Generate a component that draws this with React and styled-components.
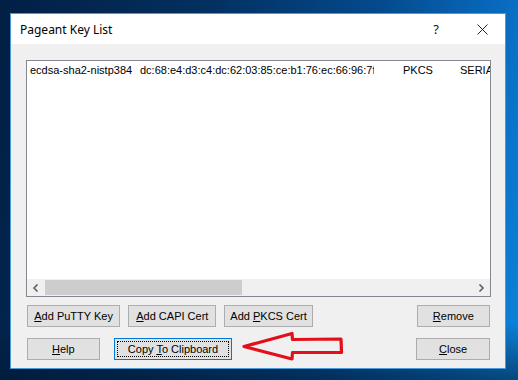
import React from 'react'
import styled, { createGlobalStyle } from 'styled-components'

const Global = createGlobalStyle`
 html, body {
  margin: 0;
  padding: 0;
 }
 body {
  width: 518px;
  height: 380px;
  overflow: hidden;
  font-family: 'Liberation Sans', Arial, sans-serif;
 }
`

const Desktop = styled.div`
 position: relative;
 width: 518px;
 height: 380px;
 padding: 13px 0 0 10px;
 box-sizing: border-box;
 background:
  linear-gradient(180deg, rgba(0, 20, 45, 0) 85%, rgba(0, 22, 48, 0.55) 100%),
  linear-gradient(100deg, #021f45 0%, #02305f 35%, #044a8c 65%, #0869bd 85%, #0d84dc 100%);
`

const Window = styled.div`
 width: 496px;
 height: 356px;
 box-sizing: border-box;
 border: 1px solid #4a9ad8;
 background: #f0f0f0;
 display: flex;
 flex-direction: column;
`

const TitleBar = styled.div`
 height: 30px;
 background: #ffffff;
 display: flex;
 align-items: center;
 padding-left: 9px;
 font-family: 'Noto Sans', 'Liberation Sans', sans-serif;
 font-size: 12px;
 color: #000;
`

const Title = styled.span`
 flex: 1;
`

const TitleButton = styled.div`
 width: 46px;
 height: 30px;
 display: flex;
 align-items: center;
 justify-content: center;
 font-size: 13px;
 color: #111;
`

const Client = styled.div`
 flex: 1;
 padding: 16px 15px 0 15px;
 display: flex;
 flex-direction: column;
`

const ListBox = styled.div`
 width: 465px;
 height: 237px;
 box-sizing: border-box;
 border: 1px solid #828790;
 background: #fff;
 display: flex;
 flex-direction: column;
 overflow: hidden;
`

const Rows = styled.div`
 flex: 1;
 overflow: hidden;
`

const Row = styled.div`
 display: flex;
 white-space: nowrap;
 height: 14px;
 padding-top: 3px;
 font-size: 11px;
 color: #000;
`

const Cell = styled.div`
 flex: none;
 width: ${p => p.$w}px;
 padding-left: 3px;
 box-sizing: border-box;
 overflow: hidden;
`

const HScroll = styled.div`
 height: 17px;
 background: #f0f0f0;
 display: flex;
 align-items: stretch;
`

const ScrollArrow = styled.div`
 width: 18px;
 display: flex;
 align-items: center;
 justify-content: center;
`

const Track = styled.div`
 flex: 1;
 display: flex;
 padding: 1px 0;
`

const Thumb = styled.div`
 width: 197px;
 background: #cdcdcd;
`

const ButtonRow = styled.div`
 display: flex;
 gap: 8px;
 margin-top: ${p => p.$top}px;
 padding-left: 1px;
`

const Button = styled.div`
 width: ${p => p.$w}px;
 height: 22px;
 box-sizing: border-box;
 border: 1px solid ${p => (p.$focus ? '#0078d7' : '#adadad')};
 background: #e1e1e1;
 display: flex;
 align-items: center;
 justify-content: center;
 font-size: 11px;
 color: #000;
 white-space: pre;
 margin-left: ${p => p.$ml || 0}px;
 position: relative;
 u {
  text-decoration: underline;
  text-underline-offset: 1px;
 }
 ${p =>
  p.$focus &&
  `
  &::after {
   content: '';
   position: absolute;
   inset: 2px;
   border: 1px dotted #000;
  }
 `}
`

const Arrow = styled.svg`
 position: absolute;
 left: 240px;
 top: 330px;
`

export default function App() {
 return (
  <Desktop>
   <Global />
   <Window>
    <TitleBar>
     <Title>Pageant Key List</Title>
     <TitleButton>?</TitleButton>
     <TitleButton>
      <svg width="11" height="11" viewBox="0 0 11 11">
       <path d="M0.5 0.5L10.5 10.5M10.5 0.5L0.5 10.5" stroke="#222" strokeWidth="1" />
      </svg>
     </TitleButton>
    </TitleBar>
    <Client>
     <ListBox>
      <Rows>
       <Row>
        <Cell $w={110}>ecdsa-sha2-nistp384</Cell>
        <Cell $w={237}>dc:68:e4:d3:c4:dc:62:03:85:ce:b1:76:ec:66:96:7f</Cell>
        <Cell $w={26} />
        <Cell $w={57}>PKCS</Cell>
        <Cell $w={80}>SERIAL</Cell>
       </Row>
      </Rows>
      <HScroll>
       <ScrollArrow>
        <svg width="8" height="8" viewBox="0 0 8 8">
         <path d="M5.5 0.5L2 4L5.5 7.5" stroke="#606060" strokeWidth="1.6" fill="none" />
        </svg>
       </ScrollArrow>
       <Track>
        <Thumb />
       </Track>
       <ScrollArrow>
        <svg width="8" height="8" viewBox="0 0 8 8">
         <path d="M2.5 0.5L6 4L2.5 7.5" stroke="#606060" strokeWidth="1.6" fill="none" />
        </svg>
       </ScrollArrow>
      </HScroll>
     </ListBox>
     <ButtonRow $top={8}>
      <Button $w={94}><span><u>A</u>dd PuTTY Key</span></Button>
      <Button $w={89}><span><u>A</u>dd CAPI Cert</span></Button>
      <Button $w={89}><span>Add <u>P</u>KCS Cert</span></Button>
      <Button $w={74} $ml={96}><span><u>R</u>emove</span></Button>
     </ButtonRow>
     <ButtonRow $top={11}>
      <Button $w={73}><span><u>H</u>elp</span></Button>
      <Button $w={119} $ml={6} $focus><span>Copy <u>T</u>o Clipboard</span></Button>
      <Button $w={74} $ml={176}><span><u>C</u>lose</span></Button>
     </ButtonRow>
    </Client>
   </Window>
   <Arrow width="110" height="34" viewBox="0 0 110 34">
    <path
     d="M4 16.5 L52 3.5 L52.5 9.5 L101 9 L101.5 22.5 L52.5 22.5 L52 29 Z"
     fill="none"
     stroke="#e3101b"
     strokeWidth="3.2"
     strokeLinejoin="round"
    />
   </Arrow>
  </Desktop>
 )
}
